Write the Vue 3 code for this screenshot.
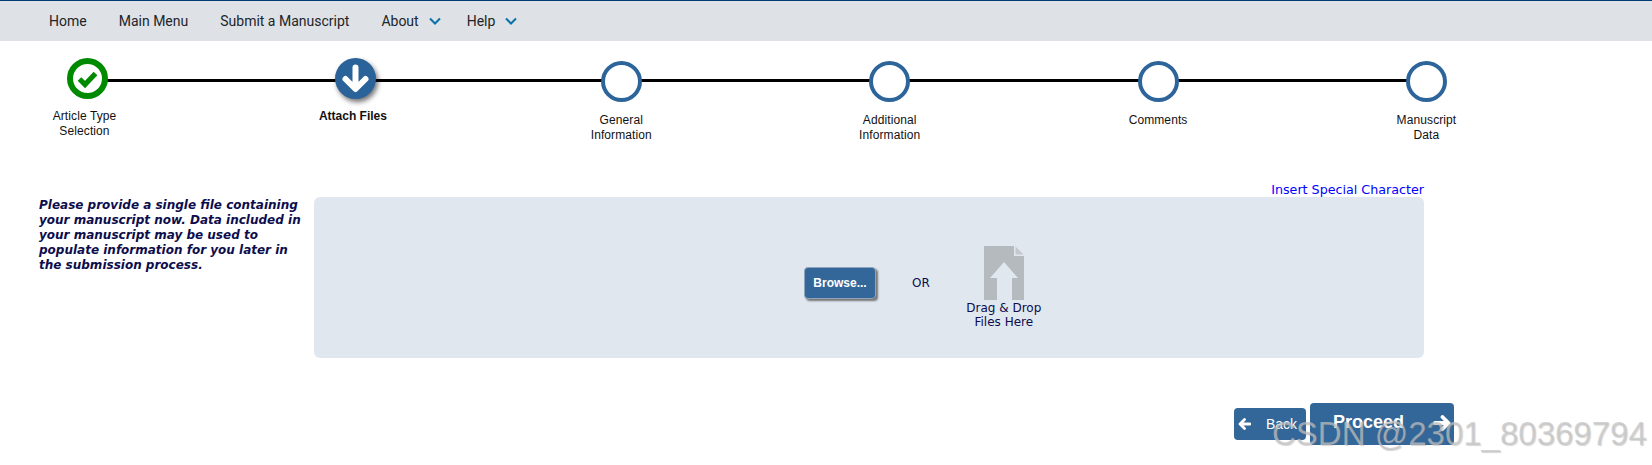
<script setup>
const navItems = [
  { label: 'Home' },
  { label: 'Main Menu' },
  { label: 'Submit a Manuscript' },
  { label: 'About', menu: true },
  { label: 'Help', menu: true }
]

const steps = [
  { lines: ['Article Type', 'Selection'], state: 'done' },
  { lines: ['Attach Files'], state: 'active' },
  { lines: ['General', 'Information'], state: 'todo' },
  { lines: ['Additional', 'Information'], state: 'todo' },
  { lines: ['Comments'], state: 'todo' },
  { lines: ['Manuscript', 'Data'], state: 'todo' }
]
</script>

<template>
  <div class="page">
    <nav class="nav">
      <a v-for="item in navItems" :key="item.label" class="nav-item" :class="{ menu: item.menu }">
        {{ item.label }}
        <svg v-if="item.menu" class="chevron" width="12" height="8" viewBox="0 0 12 8">
          <path d="M1 1.500l5 5 5-5" fill="none" stroke="#0b6fa8" stroke-width="2" />
        </svg>
      </a>
    </nav>

    <div class="stepper">
      <div class="step-line"></div>
      <div v-for="step in steps" :key="step.lines[0]" class="step" :class="step.state">
        <div class="circle">
          <svg v-if="step.state === 'done'" width="25" height="25" viewBox="0 0 25 25">
            <path d="M4.500 13l5.500 5.500L20.500 7.500" fill="none" stroke="#008a00" stroke-width="5.200" />
          </svg>
          <svg v-if="step.state === 'active'" width="31" height="31" viewBox="0 0 31 31">
            <path d="M15.500 4.500v21M5.500 16l10 10 10-10" fill="none" stroke="#fff" stroke-width="6" stroke-linecap="round" stroke-linejoin="round" />
          </svg>
        </div>
        <div class="step-label">
          <div v-for="line in step.lines" :key="line">{{ line }}</div>
        </div>
      </div>
    </div>

    <div class="link-row">
      <a class="special-link">Insert Special Character</a>
    </div>

    <div class="content">
      <p class="instructions">
        Please provide a single file containing your manuscript now. Data included in your manuscript may be used to populate information for you later in the submission process.
      </p>
      <div class="upload-panel">
        <button class="browse">Browse...</button>
        <span class="or">OR</span>
        <div class="drop">
          <svg width="40" height="54" viewBox="0 0 40 54">
            <path d="M0 0h30v10h10v44H28V32h6L20 16 6 32h7v22H0z" fill="#b5babe" />
            <path d="M31.500 0.500L39.500 8.500h-8z" fill="#c3c8cc" />
          </svg>
          <div class="drop-text">Drag &amp; Drop<br>Files Here</div>
        </div>
      </div>
    </div>

    <div class="actions">
      <button class="btn back">
        <svg width="13" height="12" viewBox="0 0 13 12">
          <path d="M12 6H2.500M6.500 1.500L2 6l4.500 4.500" fill="none" stroke="#fff" stroke-width="2.800" stroke-linecap="round" stroke-linejoin="round" />
        </svg>
        <span>Back</span>
      </button>
      <button class="btn proceed">
        <span>Proceed</span>
        <svg width="18" height="16" viewBox="0 0 18 16">
          <path d="M2 8h13M9.500 2l6 6-6 6" fill="none" stroke="#fff" stroke-width="3.800" stroke-linecap="round" stroke-linejoin="round" />
        </svg>
      </button>
    </div>

    <div class="watermark">CSDN @2301_80369794</div>
  </div>
</template>

<style scoped>
.page {
  position: relative;
  width: 1652px;
  height: 465px;
  overflow: hidden;
  background: #fff;
  font-family: "Liberation Sans", Arial, sans-serif;
}

.nav {
  display: flex;
  align-items: center;
  height: 40px;
  padding-left: 49px;
  gap: 32px;
  background: #dee2e6;
  border-top: 1px solid #003b71;
  font-family: Roboto, sans-serif;
  font-size: 14px;
  color: #212529;
}

.nav-item {
  display: flex;
  align-items: center;
}

.nav-item.menu {
  gap: 10px;
  margin-right: -6px;
}

.stepper {
  position: relative;
  display: flex;
  gap: 148.400px;
  height: 142px;
  padding-left: 27.500px;
}

.step-line {
  position: absolute;
  left: 87px;
  top: 38px;
  width: 1320px;
  height: 2.500px;
  background: #000;
}

.step {
  position: relative;
  width: 120px;
  padding-top: 20px;
  text-align: center;
  font-size: 12px;
  line-height: 15px;
  letter-spacing: 0.1px;
  color: #111;
}

.circle {
  display: flex;
  align-items: center;
  justify-content: center;
  box-sizing: border-box;
  width: 41px;
  height: 41px;
  margin: 0 auto;
  border: 4px solid #2d659b;
  border-radius: 50%;
  background: #fff;
}

.step-label {
  margin-top: 11px;
}

.step.done,
.step.active {
  padding-top: 17px;
}

.step.done .circle {
  border: 6px solid #008a00;
}

.step.active {
  margin-right: -3px;
}

.step.active .circle {
  background: #2a6399;
  border: 0;
  box-shadow: 2px 3px 5px rgba(0, 0, 0, 0.55);
}

.step.done .step-label,
.step.active .step-label {
  margin-top: 10px;
  padding-right: 6px;
}

.step.active .step-label {
  font-weight: bold;
  letter-spacing: 0;
}

.link-row {
  display: flex;
  justify-content: flex-end;
  width: 1424px;
  height: 14px;
  line-height: 14px;
}

.special-link {
  font-family: "DejaVu Sans", Verdana, sans-serif;
  font-size: 12.700px;
  color: #0000ff;
}

.content {
  display: flex;
  gap: 11px;
  padding-left: 39px;
}

.instructions {
  width: 264px;
  margin: 1px 0 0;
  font-family: "DejaVu Sans", Verdana, sans-serif;
  font-size: 12px;
  font-weight: bold;
  font-style: italic;
  line-height: 15px;
  color: #0d0d4d;
}

.upload-panel {
  display: flex;
  box-sizing: border-box;
  width: 1110px;
  height: 161px;
  padding: 49px 0 0 490px;
  border-radius: 6px;
  background: #e0e7ef;
  font-family: "DejaVu Sans", Verdana, sans-serif;
  font-size: 12px;
  color: #0d0d4d;
}

.browse {
  width: 72px;
  height: 32px;
  margin-top: 21px;
  padding: 0;
  border: 1px solid #8ea4bc;
  border-radius: 4px;
  background: #336699;
  box-shadow: 2px 2px 2px #777;
  font-family: "Liberation Sans", Arial, sans-serif;
  font-size: 12px;
  font-weight: bold;
  color: #fff;
}

.or {
  margin: 30px 0 0 36px;
  line-height: 15px;
}

.drop {
  width: 90px;
  margin-left: 29px;
  text-align: center;
  line-height: 14px;
}

.drop svg {
  display: block;
  margin: 0 auto;
}

.drop-text {
  margin-top: 1px;
}

.actions {
  display: flex;
  justify-content: flex-end;
  align-items: center;
  gap: 4px;
  padding-right: 198px;
  margin-top: 45px;
}

.btn {
  display: flex;
  align-items: center;
  justify-content: space-between;
  box-sizing: border-box;
  border: 0;
  border-radius: 4px;
  background: #336699;
  font-family: "Liberation Sans", Arial, sans-serif;
  color: #fff;
}

.back {
  width: 72px;
  height: 32px;
  padding: 0 9px 0 4px;
  font-size: 14px;
}

.proceed {
  width: 144px;
  height: 42px;
  padding: 0 3px 3px 23px;
  font-size: 18px;
  font-weight: bold;
}

.watermark {
  position: absolute;
  left: 1272px;
  top: 415px;
  font-size: 33px;
  line-height: 38px;
  white-space: nowrap;
  color: rgba(195, 195, 195, 0.7);
  text-shadow: 1px 1px 1px rgba(120, 120, 120, 0.3);
}
</style>

<style>
body {
  background: #fff;
}
</style>
